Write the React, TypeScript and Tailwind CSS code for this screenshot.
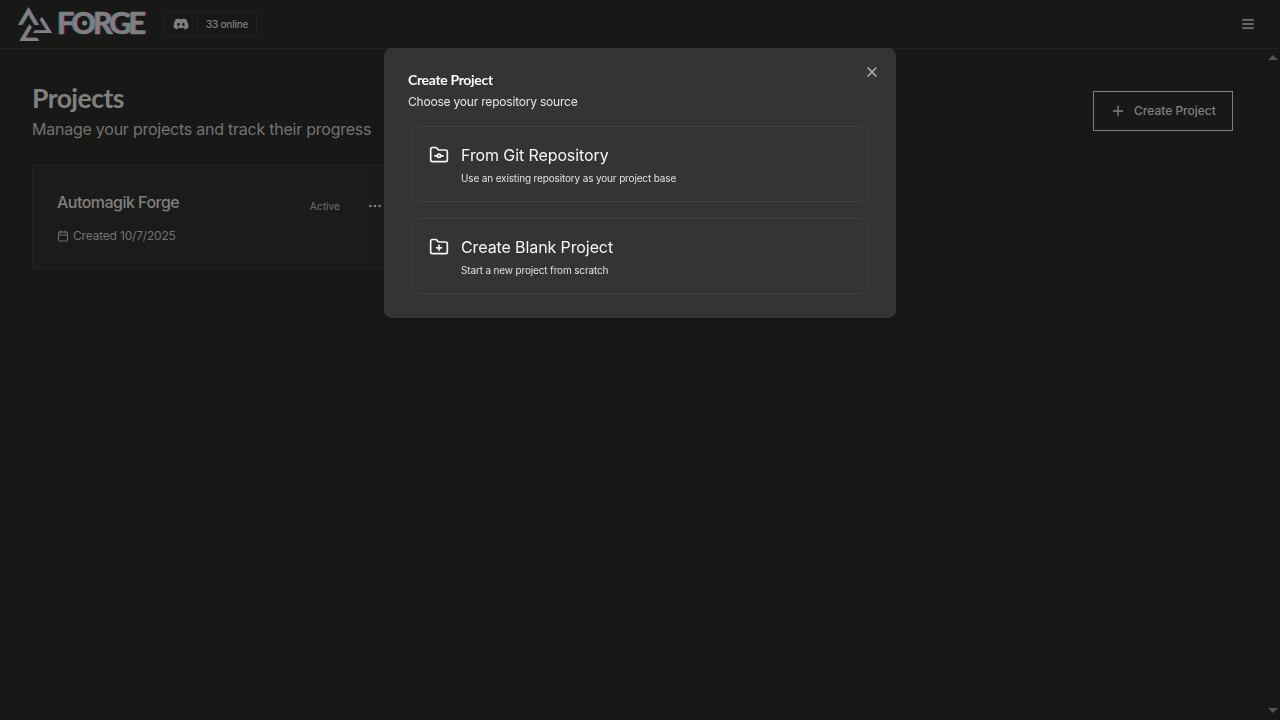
import type { ReactNode } from 'react';
import { Calendar, FolderGit, FolderPlus, MoreHorizontal, Plus, X } from 'lucide-react';
import { FaDiscord } from 'react-icons/fa';

function LogoMark() {
  return (
    <>
      <path d="M18.3 25 28.5 7.3 38.9 25H34.8L28.5 14.4 22.2 25Z" />
      <path d="M42 17 52 33H33.2L35 30.2H46.6L40 19.8Z" />
      <path d="M19.6 41 29.6 24.2 31.6 27.2 25.4 37.8H37L39.2 41Z" />
    </>
  );
}

function Logo() {
  return (
    <div className="relative flex h-12 w-[148px] shrink-0 items-start">
      <svg className="h-12 w-[148px]" viewBox="0 0 148 48" aria-hidden="true">
        <g fill="#17605f" transform="translate(-0.7 0)"><LogoMark /></g>
        <g fill="#6c1b6c" transform="translate(0.7 0)"><LogoMark /></g>
        <g fill="#808080"><LogoMark /></g>
        <circle cx="84.6" cy="23" r="2.6" fill="#808080" />
      </svg>
      <span className="absolute left-[57px] top-[2px] whitespace-nowrap font-[Lato,sans-serif] text-[30.5px] font-bold leading-10 tracking-[-2.9px] text-[#808080] [-webkit-text-stroke:0.4px_#808080] [text-shadow:-1px_0_#17605f,1px_0_#7c1b7c]">
        FORGE
      </span>
    </div>
  );
}

function MenuIcon() {
  return (
    <svg width="16" height="16" viewBox="0 0 16 16" stroke="currentColor" strokeWidth="1.5" strokeLinecap="round">
      <path d="M2.7 4H13.3M2.7 8H13.3M2.7 12H13.3" />
    </svg>
  );
}

function Header() {
  return (
    <header className="flex h-[49px] shrink-0 items-start border-b border-[#222220]">
      <Logo />
      <div className="ml-4 mt-3 flex h-6 items-stretch border border-[#21211f]">
        <div className="flex w-[33px] items-center justify-center border-r border-[#21211f] text-[#7f7f7e]">
          <FaDiscord size={16} />
        </div>
        <div className="flex w-[58px] items-center pl-2 text-[10px] font-medium tracking-[-0.22px] text-[#80807e]">33 online</div>
      </div>
      <button className="ml-auto mr-6 mt-4 text-[#80807e]">
        <MenuIcon />
      </button>
    </header>
  );
}

function ProjectCard() {
  return (
    <article className="flex h-[104px] w-[390px] flex-col border border-[#222220] bg-[#1b1b19] px-6">
      <div className="mt-6 flex items-center">
        <h3 className="text-base font-medium tracking-[-0.53px] text-[#80807e]">Automagik Forge</h3>
        <span className="ml-auto mt-2 text-[10px] font-medium text-[#636361]">Active</span>
        <MoreHorizontal size={16} className="ml-[27px] mr-[14px] mt-2 text-[#80807e]" />
      </div>
      <p className="mt-[14px] flex items-center gap-1 text-xs tracking-[-0.19px] text-[#737371]">
        <Calendar size={12} />
        Created 10/7/2025
      </p>
    </article>
  );
}

function ScrollTrack() {
  return (
    <div className="flex w-[15px] shrink-0 flex-col items-center justify-between bg-[#171715] pb-[7px] pt-[6px]">
      <svg width="10" height="5" viewBox="0 0 10 5"><path d="M5 0 10 5H0Z" fill="#52524f" /></svg>
      <svg width="10" height="5" viewBox="0 0 10 5"><path d="M0 0H10L5 5Z" fill="#52524f" /></svg>
    </div>
  );
}

function SourceOption({ icon, title, text }: { icon: ReactNode; title: string; text: string }) {
  return (
    <button className="flex h-[76px] gap-3 rounded-lg border border-[#41413f] pl-4 pt-[18px] text-left text-[#f5f5f3]">
      {icon}
      <span className="flex flex-col">
        <span className="text-base leading-5 tracking-[-0.1px]">{title}</span>
        <span className="mt-[5px] text-[10px] leading-4 tracking-[-0.15px] text-[#e0e0de]">{text}</span>
      </span>
    </button>
  );
}

function CreateProjectDialog() {
  return (
    <div className="fixed inset-0 flex items-start justify-center pt-12">
      <section role="dialog" className="flex h-[270px] w-[512px] flex-col rounded-lg bg-[#343432] px-6 shadow-lg">
        <div className="flex justify-between">
          <div className="pt-[23px]">
            <h2 className="font-[Lato,sans-serif] text-sm font-bold leading-[18px] tracking-[-0.33px] text-[#fafaf8]">Create Project</h2>
            <p className="mt-1 text-xs leading-[18px] tracking-[-0.2px] text-[#e6e6e4]">Choose your repository source</p>
          </div>
          <button className="-mr-2 mt-4 h-4 text-[#b7b7b5]"><X size={16} /></button>
        </div>
        <div className="mx-1 mt-[15px] flex flex-col gap-4">
          <SourceOption icon={<FolderGit size={20} />} title="From Git Repository" text="Use an existing repository as your project base" />
          <SourceOption icon={<FolderPlus size={20} />} title="Create Blank Project" text="Start a new project from scratch" />
        </div>
      </section>
    </div>
  );
}

export default function App() {
  return (
    <div className="flex h-screen flex-col overflow-hidden bg-[#181816] font-[Inter,sans-serif]">
      <Header />
      <div className="flex flex-1">
        <main className="flex-1 px-8">
          <div className="flex items-start justify-between">
            <div className="pt-[33px]">
              <h1 className="font-[Lato,sans-serif] text-[26.5px] font-bold leading-8 tracking-[-0.53px] text-[#80807e]">Projects</h1>
              <p className="mt-[3px] text-base leading-6 tracking-[-0.24px] text-[#737371]">Manage your projects and track their progress</p>
            </div>
            <button className="mt-[42px] flex h-10 w-[140px] items-center gap-2 border border-[#80807e] pl-4 text-xs font-medium text-[#80807e]">
              <Plus size={16} />
              Create Project
            </button>
          </div>
          <div className="mt-6">
            <ProjectCard />
          </div>
        </main>
        <ScrollTrack />
      </div>
      <CreateProjectDialog />
    </div>
  );
}
